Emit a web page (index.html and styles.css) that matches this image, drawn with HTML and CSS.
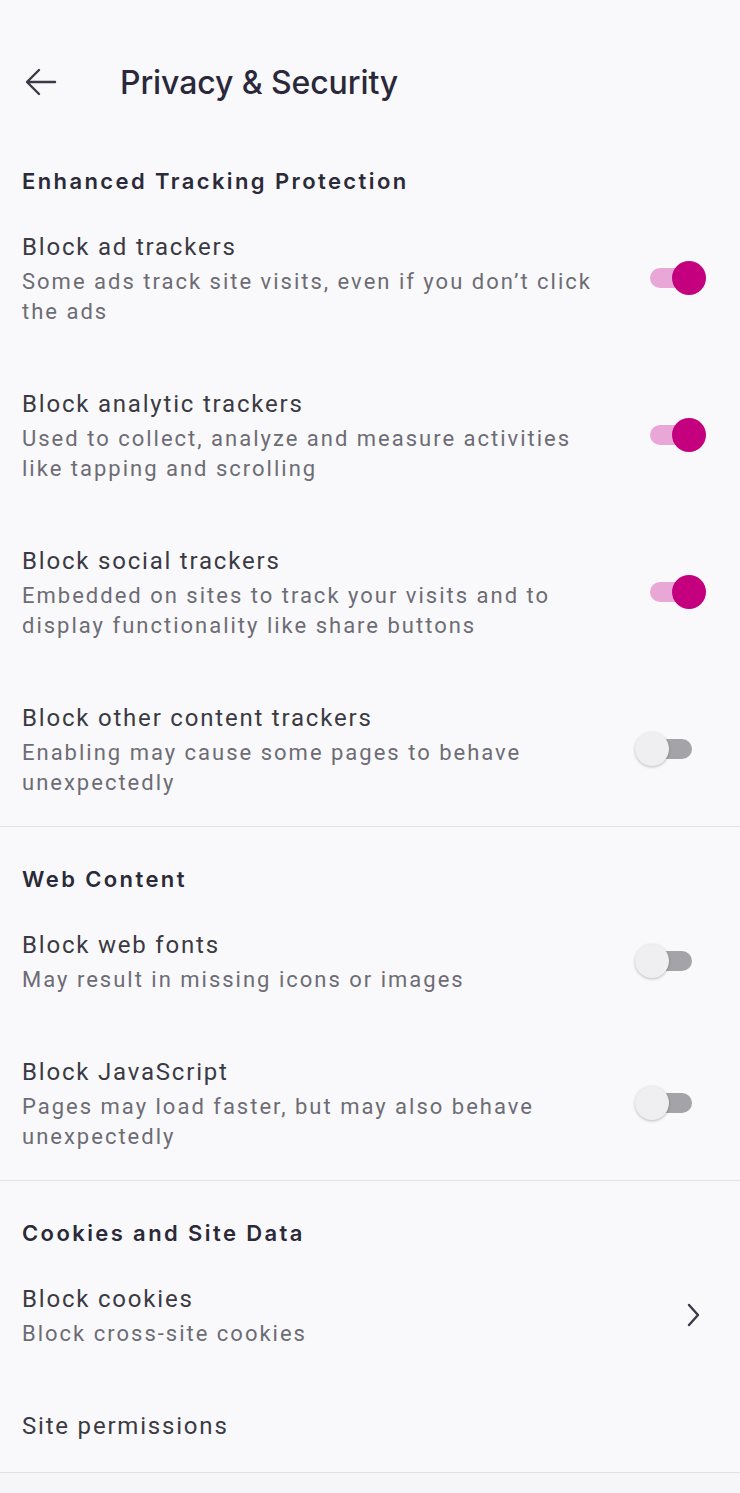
FILE: index.html
```html
<!doctype html>
<html lang="en">
    <head>
        <title>Privacy &amp; Security</title>
        <meta name="viewport" content="width=device-width, initial-scale=1"/>
        <link rel="stylesheet" href="styles.css">
    </head>
    <body>
        <div class="toolbar">
            <svg class="back" width="34" height="30" viewBox="0 0 34 30">
                <path d="M31 15H4M15 3L3 15l12 12" fill="none" stroke="#3a3946" stroke-width="2.4" stroke-linecap="round" stroke-linejoin="round"/>
            </svg>
            <h1>Privacy &amp; Security</h1>
        </div>

        <div class="section section--first">
            <h2>Enhanced Tracking Protection</h2>
            <div class="row">
                <div class="text">
                    <div class="title">Block ad trackers</div>
                    <div class="summary">Some ads track site visits, even if you don’t click the ads</div>
                </div>
                <div class="switch switch--on"><span class="thumb"></span></div>
            </div>
            <div class="row">
                <div class="text">
                    <div class="title">Block analytic trackers</div>
                    <div class="summary">Used to collect, analyze and measure activities like tapping and scrolling</div>
                </div>
                <div class="switch switch--on"><span class="thumb"></span></div>
            </div>
            <div class="row">
                <div class="text">
                    <div class="title">Block social trackers</div>
                    <div class="summary">Embedded on sites to track your visits and to display functionality like share buttons</div>
                </div>
                <div class="switch switch--on"><span class="thumb"></span></div>
            </div>
            <div class="row">
                <div class="text">
                    <div class="title">Block other content trackers</div>
                    <div class="summary">Enabling may cause some pages to behave unexpectedly</div>
                </div>
                <div class="switch"><span class="thumb"></span></div>
            </div>
        </div>

        <div class="section">
            <h2>Web Content</h2>
            <div class="row">
                <div class="text">
                    <div class="title">Block web fonts</div>
                    <div class="summary">May result in missing icons or images</div>
                </div>
                <div class="switch"><span class="thumb"></span></div>
            </div>
            <div class="row">
                <div class="text">
                    <div class="title">Block JavaScript</div>
                    <div class="summary">Pages may load faster, but may also behave unexpectedly</div>
                </div>
                <div class="switch"><span class="thumb"></span></div>
            </div>
        </div>

        <div class="section">
            <h2>Cookies and Site Data</h2>
            <div class="row">
                <div class="text">
                    <div class="title">Block cookies</div>
                    <div class="summary">Block cross-site cookies</div>
                </div>
                <svg class="chevron" width="18" height="26" viewBox="0 0 18 26">
                    <path d="M5 3l9 10-9 10" fill="none" stroke="#3a3946" stroke-width="2.4" stroke-linecap="round" stroke-linejoin="round"/>
                </svg>
            </div>
            <div class="row">
                <div class="text">
                    <div class="title">Site permissions</div>
                </div>
            </div>
        </div>
        <div class="footer"></div>
    </body>
</html>
```

FILE: styles.css
```css
body {
    margin: 0;
    background-color: #f9f9fb;
    font-family: Roboto, "Liberation Sans", sans-serif;
}
.toolbar {
    display: flex;
    align-items: center;
    height: 164px;
    padding-left: 24px;
    box-sizing: border-box;
}
.toolbar .back {
    margin-right: 62px;
}
.toolbar h1 {
    margin: 0;
    font-family: Inter, "Open Sans", sans-serif;
    font-size: 32px;
    font-weight: 500;
    letter-spacing: -0.1px;
    color: #2a283a;
}
.section {
    border-bottom: 1px solid #e2e2e6;
    padding-top: 35px;
}
.section--first {
    padding-top: 0;
}
.section h2 {
    margin: 0 0 0 22px;
    font-family: Inter, "Open Sans", sans-serif;
    font-size: 22px;
    font-weight: 600;
    letter-spacing: 2.4px;
    line-height: 34px;
    color: #2b2a38;
}
.row {
    display: flex;
    align-items: center;
    padding: 31px 0 28px 22px;
}
.text {
    flex: 1;
    max-width: 580px;
}
.title {
    font-size: 24px;
    letter-spacing: 1.8px;
    line-height: 36px;
    color: #3b3a44;
}
.summary {
    margin-top: 2px;
    font-size: 22px;
    letter-spacing: 2px;
    line-height: 30px;
    color: #6d6c75;
}
.switch {
    position: relative;
    width: 42px;
    height: 20px;
    margin-left: auto;
    margin-right: 48px;
    border-radius: 10px;
    background-color: #a3a3a8;
}
.switch .thumb {
    position: absolute;
    top: -7px;
    left: -15px;
    width: 34px;
    height: 34px;
    border-radius: 50%;
    background-color: #efeff1;
    box-shadow: 0 1px 3px rgba(0, 0, 0, 0.25);
}
.switch--on {
    background-color: #e8a7d6;
}
.switch--on .thumb {
    left: 22px;
    background-color: #c5007f;
    box-shadow: none;
}
.chevron {
    margin-left: auto;
    margin-right: 38px;
}
.footer {
    height: 40px;
    background-color: #f6f6f8;
}
```
